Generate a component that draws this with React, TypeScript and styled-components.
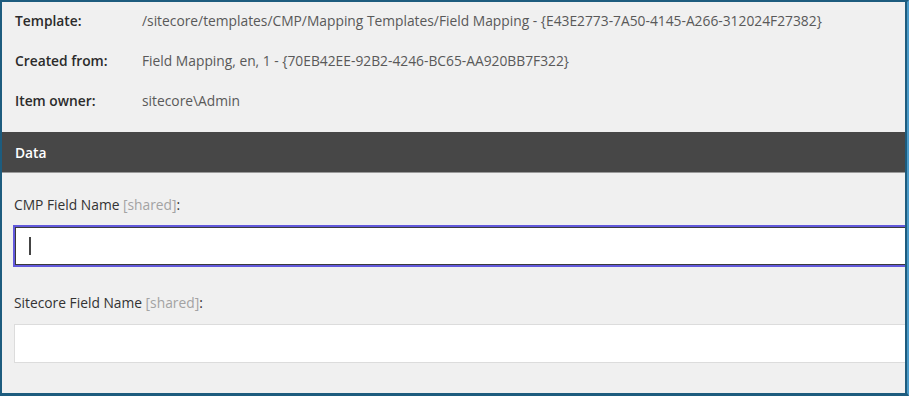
import styled, { createGlobalStyle } from 'styled-components';

const GlobalStyle = createGlobalStyle`
  html, body {
    margin: 0;
    padding: 0;
    background: #f0f0f0;
  }
  body {
    font-family: "Open Sans", "Liberation Sans", sans-serif;
    font-size: 13.8px;
  }
`;

const Frame = styled.div`
  width: 909px;
  height: 396px;
  box-sizing: border-box;
  background: #f0f0f0;
  border-top: 2px solid #1d5c7e;
  border-left: 2px solid #1d5c7e;
  border-bottom: 3px solid #1d5c7e;
  border-right: 2px solid #4c9bc8;
  overflow: hidden;
  display: flex;
  flex-direction: column;
`;

const Inner = styled.div`
  flex: 1;
  border-right: 2px solid #1d5c7e;
  display: flex;
  flex-direction: column;
  overflow: hidden;
`;

const InfoTable = styled.div`
  display: grid;
  grid-template-columns: 127px 1fr;
  align-content: start;
  row-gap: 22px;
  padding: 10px 0 0 13px;
  height: 130px;
  box-sizing: border-box;
`;

const InfoLabel = styled.div`
  font-weight: 600;
  color: #2b2b2b;
  line-height: 18px;
  white-space: nowrap;
`;

const InfoValue = styled.div`
  color: #595959;
  line-height: 18px;
  white-space: nowrap;
`;

const SectionBar = styled.div`
  height: 40px;
  flex-shrink: 0;
  background: #474747;
  border-bottom: 1px solid #9a9a9a;
  color: #fff;
  font-weight: 600;
  display: flex;
  align-items: center;
  padding-left: 13px;
`;

const Fields = styled.div`
  padding: 23px 0 0 11px;
  display: flex;
  flex-direction: column;
`;

const FieldLabel = styled.div`
  color: #333;
  line-height: 18px;
  margin-left: 1px;
  margin-bottom: 11px;
`;

const Shared = styled.span`
  color: #a3a3a3;
`;

const TextInput = styled.div<{ $focused?: boolean }>`
  height: ${p => (p.$focused ? 38 : 39)}px;
  flex-shrink: 0;
  box-sizing: border-box;
  background: #fff;
  margin-right: -4px;
  border: ${p => (p.$focused ? '1px solid #3a3a3a' : '1px solid #dcdcdc')};
  border-right: none;
  box-shadow: ${p => (p.$focused ? '0 0 0 2px #6259dc' : 'none')};
  margin-left: ${p => (p.$focused ? 2 : 1)}px;
  margin-top: ${p => (p.$focused ? 2 : 1)}px;
  margin-bottom: ${p => (p.$focused ? 29 : 0)}px;
  display: flex;
  align-items: center;
  padding-left: 13px;
`;

const Caret = styled.div`
  width: 1.5px;
  height: 18px;
  background: #444;
`;

export default function App() {
  return (
    <>
      <GlobalStyle />
      <Frame>
        <Inner>
          <InfoTable>
            <InfoLabel>Template:</InfoLabel>
            <InfoValue>/sitecore/templates/CMP/Mapping Templates/Field Mapping - {'{'}E43E2773-7A50-4145-A266-312024F27382{'}'}</InfoValue>
            <InfoLabel>Created from:</InfoLabel>
            <InfoValue>Field Mapping, en, 1 - {'{'}70EB42EE-92B2-4246-BC65-AA920BB7F322{'}'}</InfoValue>
            <InfoLabel>Item owner:</InfoLabel>
            <InfoValue>sitecore\Admin</InfoValue>
          </InfoTable>
          <SectionBar>Data</SectionBar>
          <Fields>
            <FieldLabel>CMP Field Name <Shared>[shared]</Shared>:</FieldLabel>
            <TextInput $focused>
              <Caret />
            </TextInput>
            <FieldLabel>Sitecore Field Name <Shared>[shared]</Shared>:</FieldLabel>
            <TextInput />
          </Fields>
        </Inner>
      </Frame>
    </>
  );
}
